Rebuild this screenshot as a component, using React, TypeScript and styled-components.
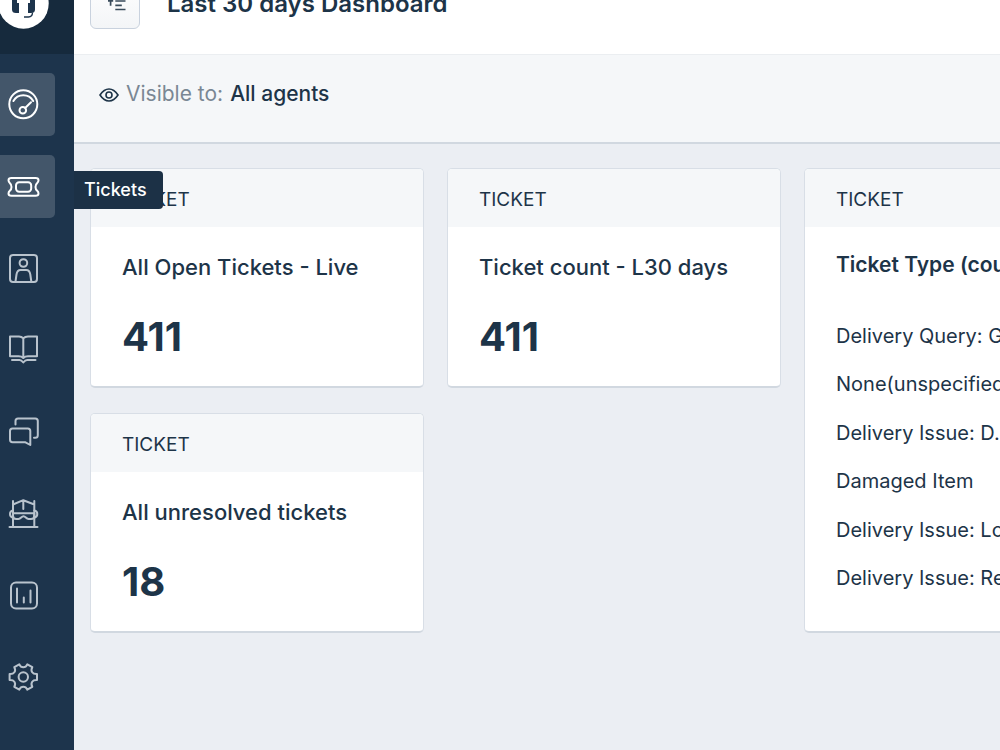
import React from "react";
import styled, { createGlobalStyle } from "styled-components";

const color = {
  ink: "#1d3448",
  muted: "#7a8794",
  nav: "#1d344c",
  navTop: "#162a3d",
  navActive: "#43566a",
  navIcon: "#b9c3cd",
  board: "#ebeef3",
  panel: "#f5f7f9",
  line: "#d1d8e0",
};

const GlobalStyle = createGlobalStyle`
  * { box-sizing: border-box; }
  html, body, #root { height: 100%; }
  body {
    margin: 0;
    overflow: hidden;
    background: ${color.board};
    color: ${color.ink};
    font-family: Inter, "Liberation Sans", sans-serif;
  }
`;

const Shell = styled.div`
  display: flex;
  min-height: 100%;
`;

const Sidebar = styled.aside`
  position: relative;
  z-index: 1;
  flex: 0 0 74px;
  background: ${color.nav};
`;

const Brand = styled.div`
  display: flex;
  align-items: flex-end;
  height: 54px;
  padding-bottom: 25px;
  background: ${color.navTop};
  overflow: hidden;
`;

const Logo = styled.svg`
  flex: none;
  display: block;
  width: 50px;
  height: 52px;
`;

const Nav = styled.nav`
  display: flex;
  flex-direction: column;
  align-items: flex-start;
  gap: 19px;
  padding-top: 19px;
`;

const NavLink = styled.a<{ $active?: boolean }>`
  position: relative;
  display: flex;
  align-items: center;
  width: 55px;
  height: 63px;
  padding-left: 8px;
  border-radius: 0 5px 5px 0;
  color: ${(p) => (p.$active ? "#fff" : color.navIcon)};
  background: ${(p) => (p.$active ? color.navActive : "transparent")};
  text-decoration: none;
`;

const Glyph = styled.svg`
  width: 31px;
  height: 31px;
  fill: none;
  stroke: currentColor;
  stroke-width: 2;
  stroke-linecap: round;
  stroke-linejoin: round;
  overflow: visible;
`;

const Tooltip = styled.span`
  position: absolute;
  left: 74px;
  top: 16px;
  padding: 0 16px 0 10px;
  border-radius: 0 4px 4px 0;
  background: #1c3146;
  color: #fff;
  font-size: 18px;
  line-height: 38px;
  font-weight: 500;
`;

const Main = styled.main`
  flex: 1;
  min-width: 0;
  overflow: hidden;
`;

const Header = styled.header`
  display: flex;
  align-items: flex-end;
  gap: 27px;
  height: 54px;
  padding: 0 16px 25px;
  background: #fff;
  overflow: hidden;
`;

const MenuButton = styled.button`
  flex: none;
  display: grid;
  place-items: center;
  width: 50px;
  height: 50px;
  padding: 0;
  border: 1px solid #c9d2de;
  border-radius: 6px;
  background: linear-gradient(#fff, #f3f5f7);
  color: #394b5b;
`;

const Title = styled.h1`
  margin: 0;
  font-size: 24px;
  line-height: 50px;
  font-weight: 600;
  white-space: nowrap;
`;

const Visibility = styled.div`
  display: flex;
  align-items: center;
  gap: 7px;
  height: 90px;
  padding: 0 25px 10px;
  border-top: 1px solid #ebeef1;
  border-bottom: 2px solid ${color.line};
  background: ${color.panel};
  font-size: 21px;
  line-height: 30px;
`;

const Muted = styled.span`
  color: ${color.muted};
`;

const Audience = styled.span`
  font-weight: 500;
`;

const Board = styled.section`
  display: grid;
  grid-template-columns: repeat(3, minmax(334px, 1fr));
  gap: 25px 23px;
  padding: 24px 16px;
`;

const Card = styled.article<{ $tall?: boolean }>`
  display: flex;
  flex-direction: column;
  min-height: 220px;
  grid-row: ${(p) => (p.$tall ? "span 2" : "auto")};
  border: 1px solid #d8dee6;
  border-bottom: 2px solid ${color.line};
  border-radius: 5px;
  background: #fff;
  overflow: hidden;
`;

const CardHead = styled.div`
  padding: 3px 31px 0;
  background: ${color.panel};
  font-size: 19px;
  line-height: 55px;
`;

const CardBody = styled.div<{ $list?: boolean }>`
  flex: 1;
  display: flex;
  flex-direction: column;
  padding: ${(p) => (p.$list ? "23px 31px 25px" : "25px 31px 24px")};
  white-space: nowrap;
`;

const CardTitle = styled.h2<{ $strong?: boolean }>`
  margin: 0;
  font-size: ${(p) => (p.$strong ? "21px" : "22px")};
  line-height: 30px;
  font-weight: ${(p) => (p.$strong ? 600 : 500)};
`;

const Count = styled.strong`
  margin-top: 30px;
  font-size: 40px;
  line-height: 50px;
  font-weight: 700;
`;

const TypeList = styled.ul`
  flex: 1;
  display: flex;
  flex-direction: column;
  justify-content: space-between;
  margin: 42px 0 14px;
  padding: 0;
  list-style: none;
  font-size: 20px;
  line-height: 28px;
`;

const icons = {
  gauge: (
    <>
      <circle cx="15.3" cy="15.3" r="14" />
      <path d="M5.4 12A11.3 11.3 0 0 1 25.2 12M17.2 19l5.8-5.7" />
      <circle cx="14.8" cy="21.3" r="3.3" />
    </>
  ),
  ticket: (
    <>
      <path d="M3.5 7H27.5Q30.5 7 30.5 9.3Q30.5 10.8 29.2 12Q27.5 13.5 27.5 15.9T29.2 19.8Q30.5 21 30.5 22.5Q30.5 24.8 27.5 24.8H3.5Q.5 24.8.5 22.5Q.5 21 1.8 19.8Q3.5 18.3 3.5 15.9T1.8 12Q.5 10.8.5 9.3Q.5 7 3.5 7z" />
      <rect x="8" y="11.2" width="15.2" height="9.5" rx="3.2" />
    </>
  ),
  contact: (
    <>
      <rect x="2" y="2" width="27" height="27" rx="3" />
      <circle cx="15.4" cy="10" r="3.8" />
      <path d="M7.5 28.5l1-7c.5-3 1.8-4.5 4-4.5h5.8c2.2 0 3.5 1.5 4 4.5l1 7" />
    </>
  ),
  book: (
    <>
      <path d="M2 1.5h9c2 0 3 .5 4.3 1.8 1.3-1.3 2.5-1.8 4.7-1.8h9v19.8h-9c-2 0-3.5.5-4.7 1.7-1.2-1.2-2.7-1.7-4.7-1.7H2zM15.3 3.3V22" />
      <path d="M4 25h7.5c1.5 0 2.5.8 3.8 2.5 1.3-1.7 2.3-2.5 3.8-2.5h8.4" />
    </>
  ),
  chat: (
    <>
      <path d="M7.5 7.5V4q0-2.5 2.5-2.5h17.3q2.5 0 2.5 2.5v14.3q0 2.5-2.5 2.5H26" />
      <path d="M4.5 11.5h15.3q2.5 0 2.5 2.5v14L17.5 25.3h-13Q2 25.3 2 22.5V14q0-2.5 2.5-2.5z" />
    </>
  ),
  helper: (
    <>
      <path d="M1.5 28h28M5 2v26M26.3 2v26M5 5.5l10.3-4.3L26.3 5.5M15.3 1.2V10" />
      <path d="M5 14.2h21.3v2.5q0 3.3-3.3 3.3h-2.5c-2.5 0-2.8-2.8-5-2.8s-2.5 2.8-5 2.8H8.3Q5 20 5 16.7zM5 11.5q-3 .5-3 3.5T5 18.8M26.3 11.5q3 .5 3 3.5t-3 3.8" />
    </>
  ),
  chart: (
    <>
      <rect x="3" y="1.5" width="26" height="26" rx="5" />
      <path d="M9 7.5v14M15.8 16.5v5M22.5 9.5v12" />
    </>
  ),
  gear: (
    <>
      <path d="M11.3 1.3Q12.5 4.2 15.3 4.2T19.3 1.3L24.3 4.2Q22.7 7 24.2 9.2Q25.5 11.2 29 11V17Q25.5 16.8 24.2 18.8Q22.7 21 24.3 23.8L19.3 26.7Q18 23.8 15.3 23.8T11.3 26.7L6.3 23.8Q7.9 21 6.4 18.8Q5.1 16.8 1.6 17V11Q5.1 11.2 6.4 9.2Q7.9 7 6.3 4.2z" />
      <circle cx="15.3" cy="14" r="4.7" />
    </>
  ),
};

type IconName = keyof typeof icons;

const Icon = ({ name }: { name: IconName }) => (
  <Glyph viewBox="0 0 31 31" aria-hidden="true">
    {icons[name]}
  </Glyph>
);

const navItems: { icon: IconName; label: string; active?: boolean; tip?: boolean }[] = [
  { icon: "gauge", label: "Dashboard", active: true },
  { icon: "ticket", label: "Tickets", active: true, tip: true },
  { icon: "contact", label: "Contacts" },
  { icon: "book", label: "Solutions" },
  { icon: "chat", label: "Forums" },
  { icon: "helper", label: "Field service" },
  { icon: "chart", label: "Analytics" },
  { icon: "gear", label: "Admin" },
];

const ticketTypes = [
  "Delivery Query: General",
  "None(unspecified)",
  "Delivery Issue: D...",
  "Damaged Item",
  "Delivery Issue: Lost",
  "Delivery Issue: Return",
];

const CountCard = ({ title, count }: { title: string; count: number }) => (
  <Card>
    <CardHead>TICKET</CardHead>
    <CardBody>
      <CardTitle>{title}</CardTitle>
      <Count>{count}</Count>
    </CardBody>
  </Card>
);

export default function App() {
  return (
    <>
      <GlobalStyle />
      <Shell>
        <Sidebar>
          <Brand>
            <Logo viewBox="0 -23 50 52" aria-hidden="true">
              <circle cx="23.5" cy="3.5" r="25.2" fill="#fff" />
              <path
                d="M12 9.5V-2q0-10 11.5-10T35 -2V9.5Q35 13 31 13H28V3H30V-2q0-7-6.500-7T17 -2V3H19V13H16Q12 13 12 9.5z"
                fill={color.nav}
              />
              <path d="M32.5 12.5Q32.5 16.8 28.5 17H24" fill="none" stroke={color.nav} strokeWidth="1.3" />
            </Logo>
          </Brand>
          <Nav aria-label="Main">
            {navItems.map(({ icon, label, active, tip }) => (
              <NavLink key={icon} href="#" $active={active} aria-label={label}>
                <Icon name={icon} />
                {tip && <Tooltip role="tooltip">{label}</Tooltip>}
              </NavLink>
            ))}
          </Nav>
        </Sidebar>
        <Main>
          <Header>
            <MenuButton type="button" aria-label="Switch dashboard">
              <svg width="26" height="26" viewBox="0 0 26 26" fill="none" stroke="currentColor" strokeWidth="1.7">
                <path d="M8.6 14.8V6M6 9.8h5.2M13.3 10h10.2M13.3 14.3h6.5M13.3 18.5h10.2" />
              </svg>
            </MenuButton>
            <Title>Last 30 days Dashboard</Title>
          </Header>
          <Visibility>
            <svg width="20" height="20" viewBox="0 0 20 20" fill="none" stroke={color.ink} strokeWidth="1.6" aria-hidden="true">
              <path d="M1 11Q5 5 10 5T19 11Q15 17 10 17T1 11z" />
              <circle cx="10" cy="11" r="3" />
            </svg>
            <Muted>Visible to:</Muted>
            <Audience>All agents</Audience>
          </Visibility>
          <Board>
            <CountCard title="All Open Tickets - Live" count={411} />
            <CountCard title="Ticket count - L30 days" count={411} />
            <Card $tall>
              <CardHead>TICKET</CardHead>
              <CardBody $list>
                <CardTitle $strong>Ticket Type (count)</CardTitle>
                <TypeList>
                  {ticketTypes.map((type) => (
                    <li key={type}>{type}</li>
                  ))}
                </TypeList>
              </CardBody>
            </Card>
            <CountCard title="All unresolved tickets" count={18} />
          </Board>
        </Main>
      </Shell>
    </>
  );
}
